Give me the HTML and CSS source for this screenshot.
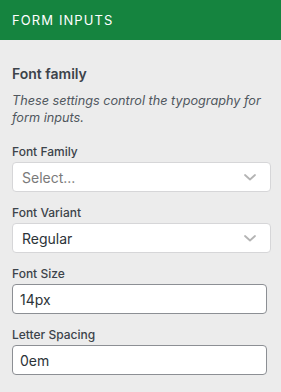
FILE: index.html
```html
<!DOCTYPE html>
<html lang="en">
<head>
  <meta charset="UTF-8" />
  <meta name="viewport" content="width=device-width, initial-scale=1.0"/>
  <title>Form Inputs</title>
  <link rel="stylesheet" href="styles.css">
</head>
<body>
  <header class="panel-header">FORM INPUTS</header>

  <section class="panel-body">
    <h3 class="group-title">Font family</h3>
    <p class="group-desc">These settings control the typography for form inputs.</p>

    <div class="field">
      <label class="field-label">Font Family</label>
      <div class="select-box">
        <span class="placeholder">Select...</span>
        <svg class="chevron" width="12" height="7" viewBox="0 0 12 7"><path d="M1 1l5 4.5L11 1" fill="none" stroke="#b4b4b4" stroke-width="1.8" stroke-linecap="round" stroke-linejoin="round"/></svg>
      </div>
    </div>

    <div class="field">
      <label class="field-label">Font Variant</label>
      <div class="select-box">
        <span class="value">Regular</span>
        <svg class="chevron" width="12" height="7" viewBox="0 0 12 7"><path d="M1 1l5 4.5L11 1" fill="none" stroke="#b4b4b4" stroke-width="1.8" stroke-linecap="round" stroke-linejoin="round"/></svg>
      </div>
    </div>

    <div class="field">
      <label class="field-label">Font Size</label>
      <input type="text" class="text-input" value="14px">
    </div>

    <div class="field">
      <label class="field-label">Letter Spacing</label>
      <input type="text" class="text-input" value="0em">
    </div>
  </section>
</body>
</html>
```

FILE: styles.css
```css
body {
  font-family: Inter, 'Noto Sans', sans-serif;
  background: #ececec;
  color: #2c3338;
  margin: 0;
  padding: 0;
}
.panel-header {
  background: #15843f;
  color: #fff;
  height: 40px;
  line-height: 40px;
  padding-left: 12px;
  font-size: 13px;
  font-weight: 400;
  letter-spacing: 1.1px;
}
.panel-body {
  padding: 24px 10px 0 12px;
}
.group-title {
  margin: 0;
  font-size: 14px;
  line-height: 20px;
  font-weight: 600;
  color: #3c434a;
}
.group-desc {
  margin: 8px 0 0;
  font-size: 12.7px;
  line-height: 17px;
  font-style: italic;
  color: #50575e;
}
.field {
  margin-top: 13px;
}
.group-desc + .field {
  margin-top: 18px;
}
.field-label {
  display: block;
  font-size: 12px;
  line-height: 16px;
  font-weight: 500;
  color: #3c434a;
  margin-bottom: 2px;
}
.select-box {
  box-sizing: border-box;
  height: 30px;
  background: #fff;
  border: 1px solid #d6d6d8;
  border-radius: 4px;
  display: flex;
  align-items: center;
  justify-content: space-between;
  padding: 0 14px 0 9px;
  font-size: 14px;
}
.placeholder {
  color: #7a7a7a;
}
.value {
  color: #2c3338;
}
.text-input {
  box-sizing: border-box;
  display: block;
  width: 255px;
  height: 30px;
  margin: 0;
  padding: 0 7px;
  background: #fff;
  border: 1px solid #8c8f94;
  border-radius: 4px;
  font-family: inherit;
  font-size: 14px;
  color: #2c3338;
}
```
